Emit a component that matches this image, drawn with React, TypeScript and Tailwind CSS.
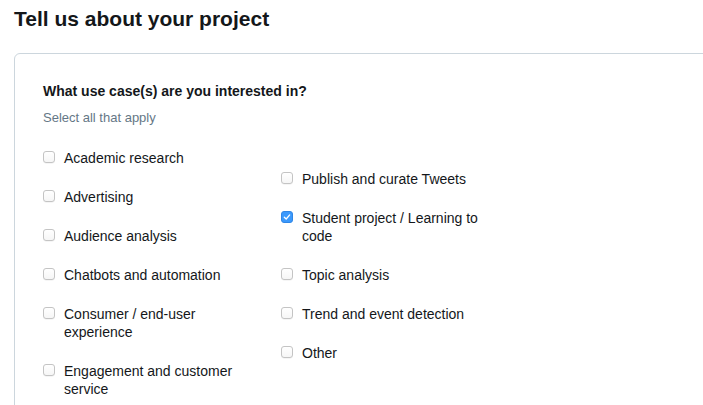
import React from "react";

type Item = { label: string; checked?: boolean };

const col1: Item[] = [
  { label: "Academic research" },
  { label: "Advertising" },
  { label: "Audience analysis" },
  { label: "Chatbots and automation" },
  { label: "Consumer / end-user experience" },
  { label: "Engagement and customer service" },
];

const col2: Item[] = [
  { label: "Publish and curate Tweets" },
  { label: "Student project / Learning to code", checked: true },
  { label: "Topic analysis" },
  { label: "Trend and event detection" },
  { label: "Other" },
];

function Box({ checked }: { checked?: boolean }) {
  if (checked) {
    return (
      <span className="mt-[2px] flex h-[12px] w-[12px] shrink-0 items-center justify-center rounded-[3px] border border-[#2f86e6] bg-[#3b99fc]">
        <svg width="8" height="8" viewBox="0 0 8 8" fill="none">
          <path d="M1.3 4.2 L3.2 6 L6.7 1.9" stroke="#ffffff" strokeWidth="1.3" strokeLinecap="round" strokeLinejoin="round" />
        </svg>
      </span>
    );
  }
  return (
    <span className="mt-[2px] block h-[12px] w-[12px] shrink-0 rounded-[3px] border border-[#c4c4c4] bg-gradient-to-b from-white to-[#f6f6f6] shadow-[0_0.5px_0.5px_rgba(0,0,0,0.08)]" />
  );
}

function Row({ item }: { item: Item }) {
  return (
    <div className="flex items-start gap-[9px]">
      <Box checked={item.checked} />
      <span className="w-[195px] text-[14px] leading-[18px] text-[#14171a]">{item.label}</span>
    </div>
  );
}

export default function App() {
  return (
    <div className="h-[405px] w-[703px] overflow-hidden bg-white font-['Liberation_Sans',Arial,Helvetica,sans-serif] text-[#14171a]">
      <h1 className="ml-[14px] mt-[6px] text-[21px] font-bold leading-[25px] text-[#14171a]">
        Tell us about your project
      </h1>
      <div className="ml-[14px] mt-[22px] h-[420px] w-[760px] rounded-[6px] border border-[#ccd6dd] pl-[28px] pt-[28px]">
        <p className="text-[14px] font-bold leading-[18px]">What use case(s) are you interested in?</p>
        <p className="mt-[9px] text-[13px] leading-[18px] text-[#657786]">Select all that apply</p>
        <div className="mt-[22px] flex">
          <div className="flex w-[238px] flex-col gap-[21px]">
            {col1.map((it) => (
              <Row key={it.label} item={it} />
            ))}
          </div>
          <div className="flex flex-col gap-[21px] pt-[21px]">
            {col2.map((it) => (
              <Row key={it.label} item={it} />
            ))}
          </div>
        </div>
      </div>
    </div>
  );
}
